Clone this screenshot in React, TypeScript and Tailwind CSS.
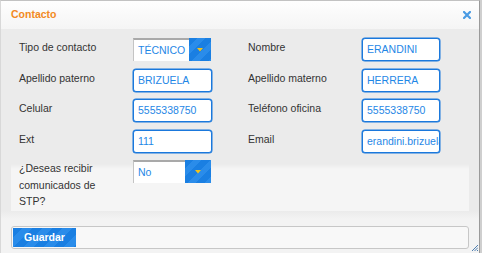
import React from "react";

const font = { fontFamily: '"Liberation Sans", Arial, sans-serif' };

function TextInput({ value }: { value: string }) {
  return (
    <div className="h-[23px] w-full overflow-hidden whitespace-nowrap rounded-[3px] border border-[#1a78dc] bg-white px-[4px] text-[10.5px] leading-[21px] text-[#1f87e6] shadow-[0_0_0_0.5px_#1a78dc]">
      {value}
    </div>
  );
}

function Select({ value }: { value: string }) {
  return (
    <div className="flex h-[23px] w-[78px]">
      <div className="flex-1 border-l border-t-2 border-l-[#c4c4c4] border-t-[#a9a9a9] bg-white px-[4px] text-[10.5px] leading-[20px] text-[#1f87e6]">
        {value}
      </div>
      <div className="flex w-[26px] items-center justify-center bg-[repeating-linear-gradient(135deg,#1a7fe2_0px,#1a7fe2_6px,#2a8cea_6px,#2a8cea_12px)]">
        <svg width="6" height="4" viewBox="0 0 6 4">
          <path d="M0 0h6L3 3.5z" fill="#f2c21b" />
        </svg>
      </div>
    </div>
  );
}

function Row({ label, children }: { label: React.ReactNode; children: React.ReactNode }) {
  return (
    <>
      <div className="pt-[1px] text-[10.5px] leading-[16.5px] text-[#333]">{label}</div>
      <div>{children}</div>
    </>
  );
}

export default function App() {
  return (
    <div className="h-[253px] w-[482px] overflow-hidden bg-[#cfcfcf]" style={font}>
      <div className="flex h-full w-[480px] flex-col border-l border-r border-t border-l-[#d8d8d8] border-r-[#9a9a9a] border-t-[#c2c2c2] bg-[#ebebeb]">
        {/* header */}
        <div className="flex h-[28px] items-center justify-between bg-linear-to-b from-[#fefefe] to-[#f5f5f5] pl-[10px] pr-[8px]">
          <span className="text-[10.5px] font-bold text-[#f28a22]">Contacto</span>
          <svg width="8" height="8" viewBox="0 0 8 8" className="mb-[1px]">
            <path d="M1 1l6 6M7 1L1 7" stroke="#4a9be3" strokeWidth="2.2" strokeLinecap="square" />
          </svg>
        </div>

        {/* body */}
        <div className="px-[10px] pt-[9px]">
          <div className="grid grid-cols-[114px_79px_36px_114px_78px] gap-y-[7.5px] pl-[8px]">
            <Row label="Tipo de contacto">
              <Select value="TÉCNICO" />
            </Row>
            <div />
            <Row label="Nombre">
              <TextInput value="ERANDINI" />
            </Row>

            <Row label="Apellido paterno">
              <TextInput value="BRIZUELA" />
            </Row>
            <div />
            <Row label="Apellido materno">
              <TextInput value="HERRERA" />
            </Row>

            <Row label="Celular">
              <TextInput value="5555338750" />
            </Row>
            <div />
            <Row label="Teléfono oficina">
              <TextInput value="5555338750" />
            </Row>

            <Row label="Ext">
              <TextInput value="111" />
            </Row>
            <div />
            <Row label="Email">
              <TextInput value="erandini.brizuela@stp.mx" />
            </Row>
          </div>

          <div className="mt-[7.5px] grid h-[51px] grid-cols-[114px_79px] bg-[linear-gradient(#ebebeb_0px,#ebebeb_4px,#f5f5f5_9px)] pl-[8px]">
            <div className="w-[104px] pt-[0px] text-[10.5px] leading-[16.5px] text-[#333]">
              ¿Deseas recibir comunicados de STP?
            </div>
            <div>
              <Select value="No" />
            </div>
          </div>
        </div>

        {/* footer */}
        <div className="relative flex-1 bg-[linear-gradient(#ebebeb_0px,#f3f3f3_8px)] px-[10px] pt-[15px]">
          <div className="flex h-[23px] items-center rounded-[3px] border border-[#c7c7c7] bg-[#f8f8f8] px-[1px]">
            <button className="h-[19px] w-[63px] bg-[repeating-linear-gradient(135deg,#1a7fe2_0px,#1a7fe2_7px,#2a8cea_7px,#2a8cea_14px)] text-[10.5px] font-bold text-white">
              Guardar
            </button>
          </div>
          <svg width="6" height="6" viewBox="0 0 6 6" className="absolute bottom-[2px] right-[1px]">
            <path d="M6 0L0 6M6 2.5L2.5 6M6 5L5 6" stroke="#4f7fb0" strokeWidth="1" />
          </svg>
        </div>
      </div>
    </div>
  );
}
